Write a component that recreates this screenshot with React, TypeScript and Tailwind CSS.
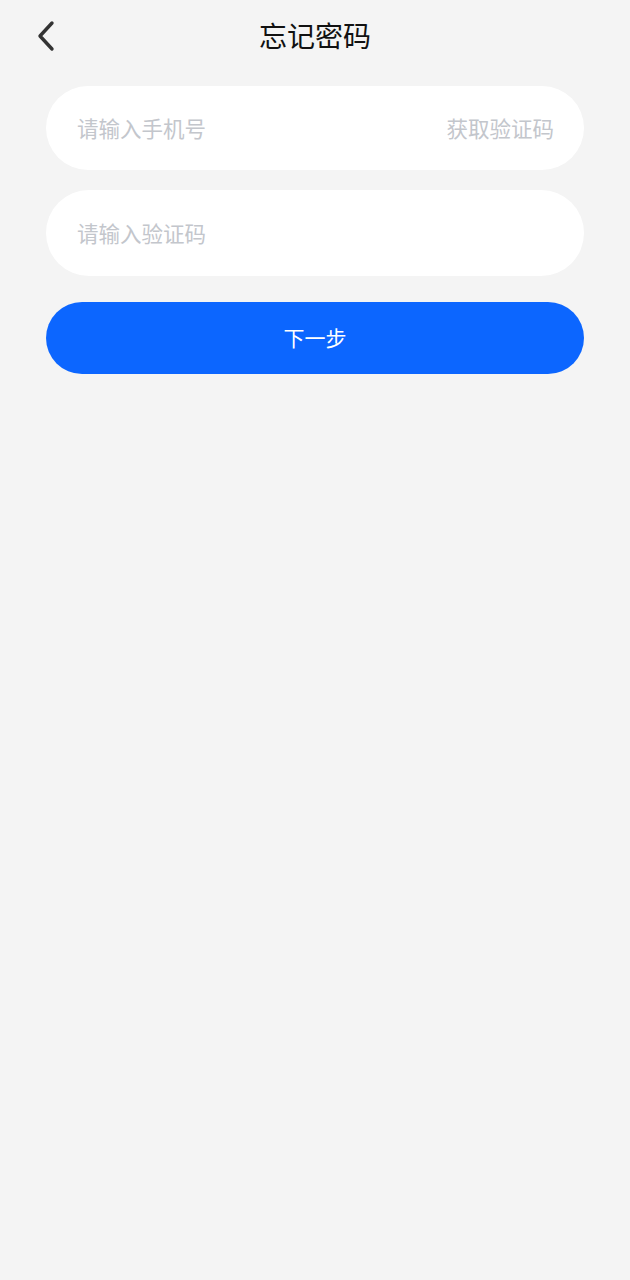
import React from "react";

const font = { fontFamily: '"Noto Sans CJK SC", "Noto Sans", sans-serif' };

export default function App() {
  return (
    <div className="min-h-[1280px] w-full bg-[#f4f4f4]" style={font}>
      <div className="relative flex h-[74px] items-center justify-center pb-[4px]">
        <button className="absolute left-[30px] top-[18px] flex h-[36px] w-[32px] items-center justify-center">
          <svg width="20" height="32" viewBox="0 0 20 32" fill="none">
            <path d="M16 3 L4 16 L16 29" stroke="#333" strokeWidth="3.4" strokeLinecap="round" strokeLinejoin="round" />
          </svg>
        </button>
        <h1 className="text-[28px] leading-none text-[#111]">忘记密码</h1>
      </div>

      <div className="flex flex-col px-[46px] pt-[12px]">
        <div className="flex h-[84px] items-center justify-between rounded-full bg-white pl-[31px] pr-[30px]">
          <span className="text-[21.5px] text-[#c3c6cc]">请输入手机号</span>
          <span className="text-[21.5px] text-[#c3c6cc]">获取验证码</span>
        </div>
        <div className="mt-[20px] flex h-[86px] items-center rounded-full bg-white pl-[31px]">
          <span className="text-[21.5px] text-[#c3c6cc]">请输入验证码</span>
        </div>
        <button className="mt-[26px] flex h-[72px] items-center justify-center rounded-full bg-[#0c66ff] text-[21px] text-white">
          下一步
        </button>
      </div>
    </div>
  );
}
